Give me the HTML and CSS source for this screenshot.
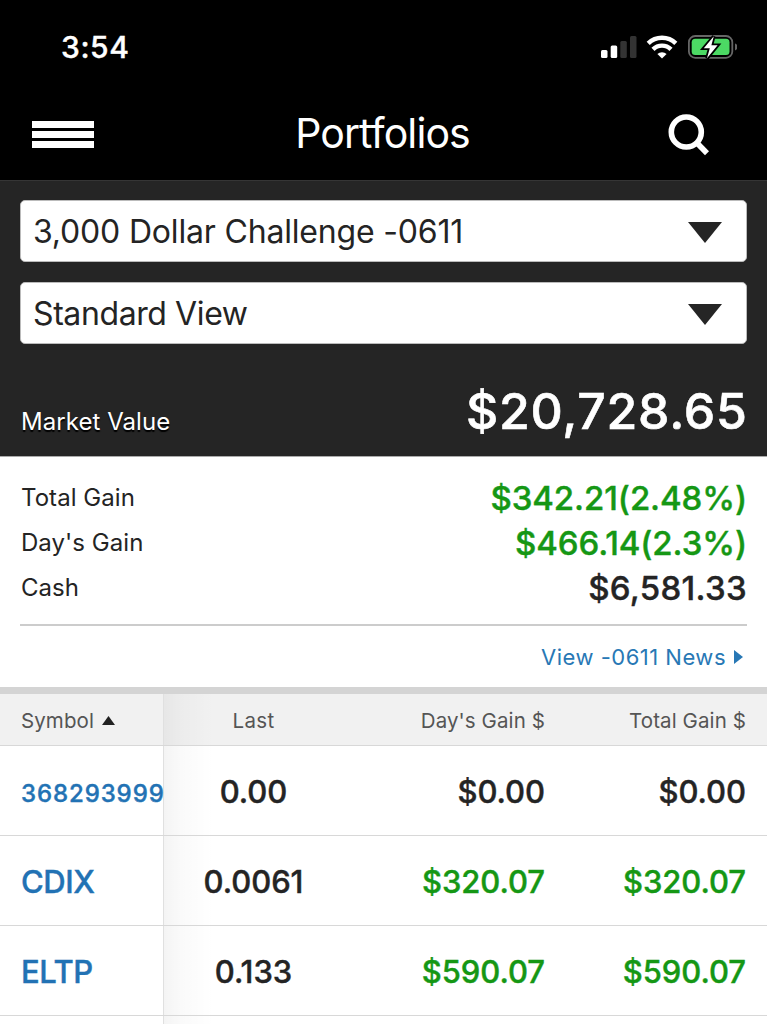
FILE: index.html
```html
<!DOCTYPE html>
<html lang="en">
<head>
<meta charset="utf-8">
<title>Portfolios</title>
<link rel="stylesheet" href="styles.css">
</head>
<body>
<div class="screen">
  <header class="top">
    <div class="status">
      <span class="time">3:54</span>
      <svg class="indicators" width="137" height="24" viewBox="600 35 137 24">
        <g fill="#fff"><rect x="601" y="50" width="6.5" height="8" rx="1.5"/><rect x="610.7" y="45.5" width="6.5" height="12.5" rx="1.5"/></g>
        <g fill="#333"><rect x="620.3" y="41" width="6.5" height="17" rx="1.5"/><rect x="630" y="36" width="6.5" height="22" rx="1.5"/></g>
        <g fill="none" stroke="#fff" stroke-width="4.4"><path d="M648.2 43.4a19.6 19.6 0 0 1 27.600 0"/><path d="M653 49.400a12.600 12.600 0 0 1 18 0"/></g>
        <path d="M662 58.500l-4.600-4.400a6.500 6.500 0 0 1 9.200 0z" fill="#fff"/>
        <rect x="688.900" y="36" width="43.400" height="21.800" rx="6.300" fill="none" stroke="#666" stroke-width="1.800"/>
        <rect x="691.700" y="38.800" width="37.800" height="16.200" rx="3.500" fill="#4cd964"/>
        <path d="M735 43.500q2.600 1 2.600 3.500t-2.600 3.500z" fill="#666"/>
        <path d="M713.800 36.300l-10 12h6l-2.800 10 10.600-13h-6.200z" fill="#fff" stroke="#000" stroke-width="3.600" paint-order="stroke"/>
      </svg>
    </div>
    <div class="navbar">
      <div class="menu"><i></i><i></i><i></i></div>
      <h1 class="title">Portfolios</h1>
      <svg class="search" width="42" height="42" viewBox="668 114 42 42" fill="none" stroke="#fff"><circle cx="686.300" cy="132" r="15" stroke-width="5.600"/><path d="M696.500 142.500l10.500 10.700" stroke-width="5.600"/></svg>
    </div>
  </header>
  <section class="dark">
    <div class="select"><span class="s1">3,000 Dollar Challenge -0611</span><svg width="34" height="21" viewBox="0 0 34 21"><path d="M0 0h34L17 21z"/></svg></div>
    <div class="select"><span class="s2">Standard View</span><svg width="34" height="21" viewBox="0 0 34 21"><path d="M0 0h34L17 21z"/></svg></div>
    <div class="market"><span class="label">Market Value</span><span class="total">$20,728.65</span></div>
  </section>
  <section class="summary">
    <div class="line"><span class="label">Total Gain</span><span class="amount up">$342.21(2.48%)</span></div>
    <div class="line"><span class="label">Day's Gain</span><span class="amount up">$466.14(2.3%)</span></div>
    <div class="line"><span class="label">Cash</span><span class="amount cash">$6,581.33</span></div>
    <div class="news"><span>View -0611 News</span><svg width="9" height="14" viewBox="0 0 9 14"><path d="M0 0l9 7-9 7z"/></svg></div>
  </section>
  <section class="table">
    <div class="row head"><div class="cell sym">Symbol <svg width="13" height="9" viewBox="0 0 13 9"><path d="M0 9h13L6.500 0z"/></svg></div><div class="cell last">Last</div><div class="cell day">Day's Gain $</div><div class="cell tot">Total Gain $</div></div>
    <div class="row"><div class="cell sym long">368293999</div><div class="cell last">0.00</div><div class="cell day">$0.00</div><div class="cell tot">$0.00</div></div>
    <div class="row"><div class="cell sym">CDIX</div><div class="cell last">0.0061</div><div class="cell day up">$320.07</div><div class="cell tot up">$320.07</div></div>
    <div class="row"><div class="cell sym">ELTP</div><div class="cell last">0.133</div><div class="cell day up">$590.07</div><div class="cell tot up">$590.07</div></div>
    <div class="row rest"><div class="cell sym"></div><div class="cell last"></div><div class="cell day"></div><div class="cell tot"></div></div>
  </section>
</div>
</body>
</html>
```
FILE: styles.css
```css
* { box-sizing: border-box; }
body { margin: 0; background: #fff; font-family: Inter, "Liberation Sans", sans-serif; font-variant-ligatures: none; color: #242424; }
svg { display: block; flex: none; }
.screen { width: 767px; height: 1024px; overflow: hidden; }
.top { height: 180px; background: #000; color: #fff; }
.status { height: 88px; display: flex; justify-content: space-between; padding: 35px 30px 0 61px; }
.time { font-size: 30px; line-height: 25px; font-weight: 500; letter-spacing: .6px; -webkit-text-stroke: .4px; }
.navbar { height: 92px; display: flex; align-items: center; justify-content: space-between; padding: 2px 57px 0 32px; }
.menu { width: 62px; height: 27px; display: flex; flex-direction: column; justify-content: space-between; margin: -2px 0 0 0; }
.menu i { display: block; height: 7px; background: #fff; }
.title { margin: -5px 0 0 3px; font-size: 41px; line-height: 50px; font-weight: 400; letter-spacing: -.9px; }
.dark { height: 276px; background: #252525; border-top: 1px solid #353535; padding: 19px 20px 0; }
.select { height: 62px; background: #fff; border: 1px solid #bbb; border-radius: 5px; display: flex; align-items: center; justify-content: space-between; padding: 0 24px 0 12px; margin-bottom: 20px; font-size: 32px; fill: #252525; }
.select svg { margin-top: 3px; }
.s1, .s2 { white-space: nowrap; }
.s1 { letter-spacing: -.18px; }
.s2 { letter-spacing: -.4px; }
.market { display: flex; justify-content: space-between; align-items: baseline; height: 90px; padding-top: 17px; color: #fff; }
.market .label { text-shadow: 0 2px 1px #000; position: relative; top: 1px; }
.label { font-size: 24px; letter-spacing: .05px; padding-left: 1px; }
.total { font-size: 50px; line-height: 60px; font-weight: 500; letter-spacing: .75px; margin-right: -.7px; -webkit-text-stroke: .6px; }
.summary { height: 231px; border-top: 1px solid #aaa; padding: 18px 20px 0; }
.line { height: 45px; display: flex; align-items: center; justify-content: space-between; }
.amount { font-size: 33px; font-weight: 500; letter-spacing: -.1px; -webkit-text-stroke: .4px; }
.cash { letter-spacing: .3px; }
.up { color: #159714; }
.news { margin-top: 14px; height: 61px; border-top: 2px solid #ccc; display: flex; align-items: center; justify-content: flex-end; gap: 8px; padding: 2px 4px 0 0; font-size: 22px; letter-spacing: .5px; color: #2878b5; fill: #2878b5; }
.table { border-top: 7px solid #d4d4d4; }
.row { height: 90px; display: grid; grid-template-columns: 164px 179px 202px 222px; border-bottom: 1px solid #d8d8d8; font-size: 31px; font-weight: 500; letter-spacing: -.05px; -webkit-text-stroke: .4px; }
.cell { display: flex; align-items: center; justify-content: flex-end; white-space: nowrap; padding-top: 2px; }
.sym { justify-content: flex-start; padding-left: 21px; color: #2272b4; border-right: 1px solid #e0e0e0; letter-spacing: -.4px; }
.long { font-size: 24px; padding-top: 6px; letter-spacing: .9px; }
.last { justify-content: center; background: linear-gradient(90deg, rgba(0,0,0,.045), rgba(0,0,0,.02) 18px, transparent 50px); }
.tot { padding-right: 21px; }
.head { height: 52px; background: #f1f1f1; font-size: 20.5px; font-weight: 400; letter-spacing: .1px; color: #555; -webkit-text-stroke: 0; }
.head .sym { color: #555; fill: #222; gap: 8px; letter-spacing: .1px; }
.head .last { letter-spacing: .3px; }
```
